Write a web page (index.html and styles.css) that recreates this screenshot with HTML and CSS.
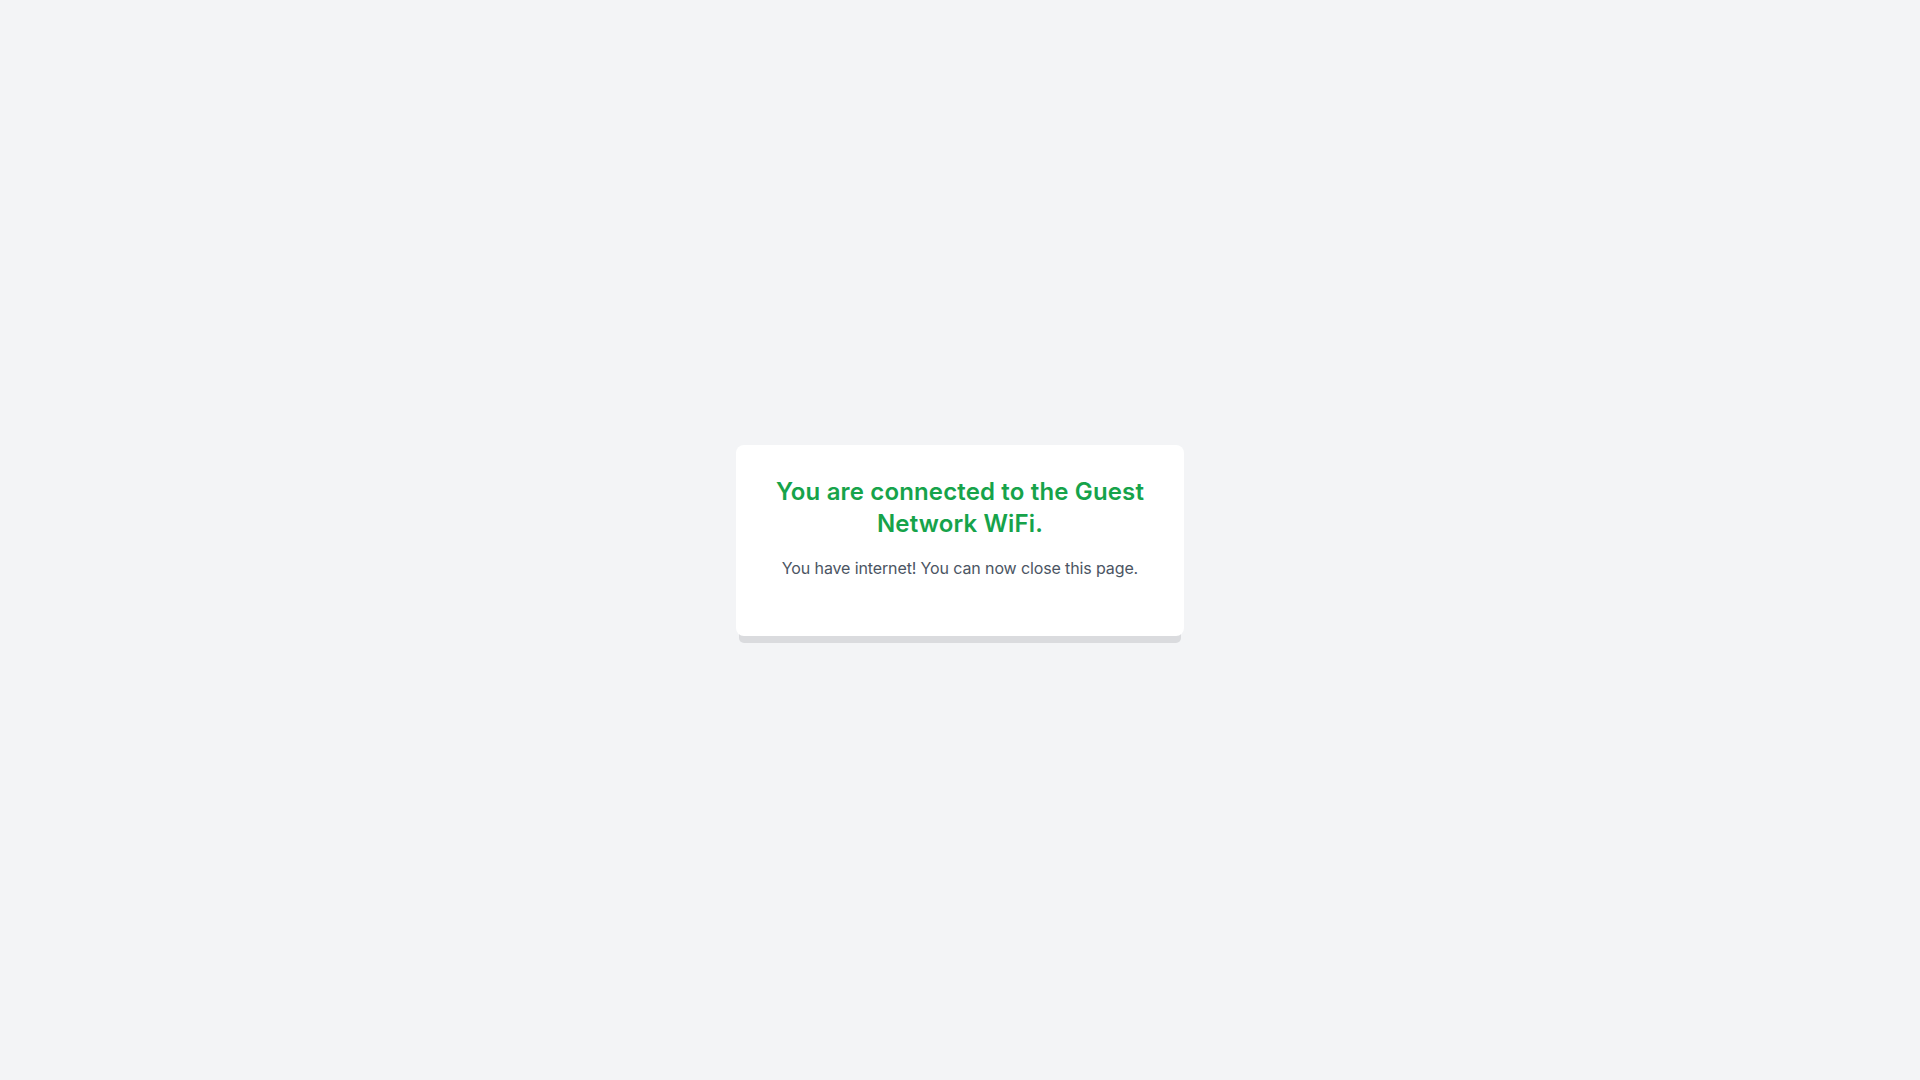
FILE: index.html
```html
<!DOCTYPE html>
<html lang="en">
<head>
<meta charset="utf-8">
<title>Guest Network WiFi</title>
<link rel="stylesheet" href="styles.css">
</head>
<body>
<main class="page">
  <section class="card">
    <h1 class="title">You are connected to the Guest Network WiFi.</h1>
    <p class="message">You have internet! You can now close this page.</p>
  </section>
</main>
</body>
</html>
```
FILE: styles.css
```css
html, body {
  margin: 0;
  padding: 0;
  height: 100%;
}
body {
  background: #f3f4f6;
  font-family: Inter, "Noto Sans", sans-serif;
}
.page {
  min-height: 100vh;
  display: flex;
  align-items: center;
  justify-content: center;
}
.card {
  width: 448px;
  box-sizing: border-box;
  background: #ffffff;
  border-radius: 8px;
  padding: 31px 32px 56px;
  text-align: center;
  box-shadow: 0 10px 0 -3px #dadbde;
}
.title {
  margin: 0;
  font-size: 24px;
  line-height: 32px;
  font-weight: 600;
  letter-spacing: 0.15px;
  color: #16a34a;
}
.message {
  margin: 16px 0 0;
  font-size: 16px;
  line-height: 24px;
  letter-spacing: -0.12px;
  color: #4b5563;
}
```
